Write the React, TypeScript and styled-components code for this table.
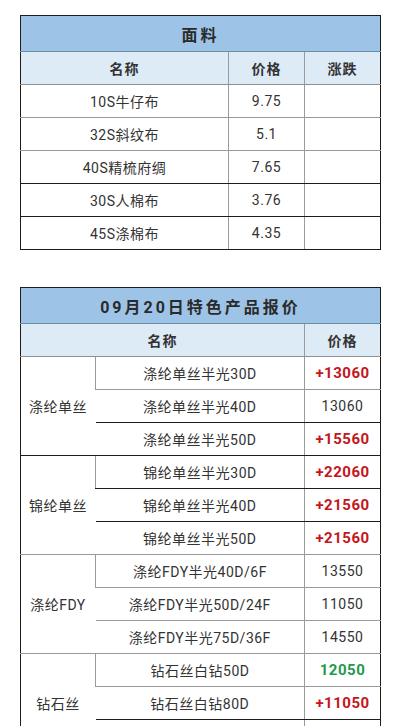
import styled, { createGlobalStyle } from 'styled-components';

const Global = createGlobalStyle`
    body {
        margin: 0;
        background: #ffffff;
        font-family: Roboto, "Noto Sans CJK SC", sans-serif;
        color: #333333;
    }
`;

const Page = styled.div`
    display: flex;
    flex-direction: column;
    gap: 37px;
    padding: 15px 20px 0 20px;
`;

const Table = styled.table`
    width: 360px;
    border-collapse: collapse;
    table-layout: fixed;
    border: 1px solid #1c1c1c;
`;

const Title = styled.th`
    height: 35px;
    padding: 0;
    background: #9dc3e6;
    border-bottom: 1px solid #6d8aa8;
    font-size: 16px;
    font-weight: 700;
    letter-spacing: 3px;
    color: #2a2a2a;
    text-align: center;
`;

const Head = styled.th`
    height: 32px;
    padding: 0;
    background: #ddebf7;
    border-bottom: 1px solid #8f8f8f;
    border-left: 1px solid #9a9a9a;
    font-size: 14px;
    font-weight: 700;
    letter-spacing: 1px;
    color: #333333;
    text-align: center;
    &:first-child {
        border-left: none;
    }
`;

const Cell = styled.td<{ $edge?: 'dark' | 'light'; $tone?: 'up' | 'down' }>`
    height: 32px;
    padding: 0;
    text-align: center;
    font-size: ${(p) => (p.$tone ? '15px' : '14px')};
    font-weight: ${(p) => (p.$tone ? 700 : 400)};
    letter-spacing: 0.5px;
    color: ${(p) => (p.$tone === 'up' ? '#c4161c' : p.$tone === 'down' ? '#1f9a4e' : '#333333')};
    border-left: 1px solid #9a9a9a;
    border-bottom: 1px solid ${(p) => (p.$edge === 'dark' ? '#1c1c1c' : '#9a9a9a')};
    &:first-child {
        border-left: none;
    }
`;

const Group = styled(Cell)`
    border-left: none;
`;

type Tone = 'up' | 'down' | undefined;

const fabrics: { name: string; price: string; edge: 'dark' | 'light' }[] = [
    { name: '10S牛仔布', price: '9.75', edge: 'light' },
    { name: '32S斜纹布', price: '5.1', edge: 'light' },
    { name: '40S精梳府绸', price: '7.65', edge: 'dark' },
    { name: '30S人棉布', price: '3.76', edge: 'dark' },
    { name: '45S涤棉布', price: '4.35', edge: 'dark' }
];

const groups: {
    label: string;
    edge: 'dark' | 'light';
    rows: { name: string; price: string; tone: Tone; edge: 'dark' | 'light' }[];
}[] = [
    {
        label: '涤纶单丝',
        edge: 'dark',
        rows: [
            { name: '涤纶单丝半光30D', price: '+13060', tone: 'up', edge: 'light' },
            { name: '涤纶单丝半光40D', price: '13060', tone: undefined, edge: 'dark' },
            { name: '涤纶单丝半光50D', price: '+15560', tone: 'up', edge: 'dark' }
        ]
    },
    {
        label: '锦纶单丝',
        edge: 'light',
        rows: [
            { name: '锦纶单丝半光30D', price: '+22060', tone: 'up', edge: 'dark' },
            { name: '锦纶单丝半光40D', price: '+21560', tone: 'up', edge: 'dark' },
            { name: '锦纶单丝半光50D', price: '+21560', tone: 'up', edge: 'light' }
        ]
    },
    {
        label: '涤纶FDY',
        edge: 'light',
        rows: [
            { name: '涤纶FDY半光40D/6F', price: '13550', tone: undefined, edge: 'light' },
            { name: '涤纶FDY半光50D/24F', price: '11050', tone: undefined, edge: 'light' },
            { name: '涤纶FDY半光75D/36F', price: '14550', tone: undefined, edge: 'light' }
        ]
    },
    {
        label: '钻石丝',
        edge: 'dark',
        rows: [
            { name: '钻石丝白钻50D', price: '12050', tone: 'down', edge: 'light' },
            { name: '钻石丝白钻80D', price: '+11050', tone: 'up', edge: 'dark' },
            { name: '钻石丝白钻100D', price: '10550', tone: undefined, edge: 'dark' }
        ]
    }
];

export default function App() {
    return (
        <>
            <Global />
            <Page>
                <Table>
                    <colgroup>
                        <col style={{ width: 208 }} />
                        <col style={{ width: 76 }} />
                        <col style={{ width: 76 }} />
                    </colgroup>
                    <thead>
                        <tr>
                            <Title colSpan={3}>面料</Title>
                        </tr>
                        <tr>
                            <Head>名称</Head>
                            <Head>价格</Head>
                            <Head>涨跌</Head>
                        </tr>
                    </thead>
                    <tbody>
                        {fabrics.map((f) => (
                            <tr key={f.name}>
                                <Cell $edge={f.edge}>{f.name}</Cell>
                                <Cell $edge={f.edge}>{f.price}</Cell>
                                <Cell $edge={f.edge}></Cell>
                            </tr>
                        ))}
                    </tbody>
                </Table>

                <Table>
                    <colgroup>
                        <col style={{ width: 75 }} />
                        <col style={{ width: 209 }} />
                        <col style={{ width: 76 }} />
                    </colgroup>
                    <thead>
                        <tr>
                            <Title colSpan={3}>09月20日特色产品报价</Title>
                        </tr>
                        <tr>
                            <Head colSpan={2}>名称</Head>
                            <Head>价格</Head>
                        </tr>
                    </thead>
                    <tbody>
                        {groups.map((g) =>
                            g.rows.map((r, i) => (
                                <tr key={r.name}>
                                    {i === 0 && (
                                        <Group rowSpan={g.rows.length} $edge={g.edge}>
                                            {g.label}
                                        </Group>
                                    )}
                                    <Cell $edge={r.edge}>{r.name}</Cell>
                                    <Cell $edge={r.edge} $tone={r.tone}>
                                        {r.price}
                                    </Cell>
                                </tr>
                            ))
                        )}
                    </tbody>
                </Table>
            </Page>
        </>
    );
}
